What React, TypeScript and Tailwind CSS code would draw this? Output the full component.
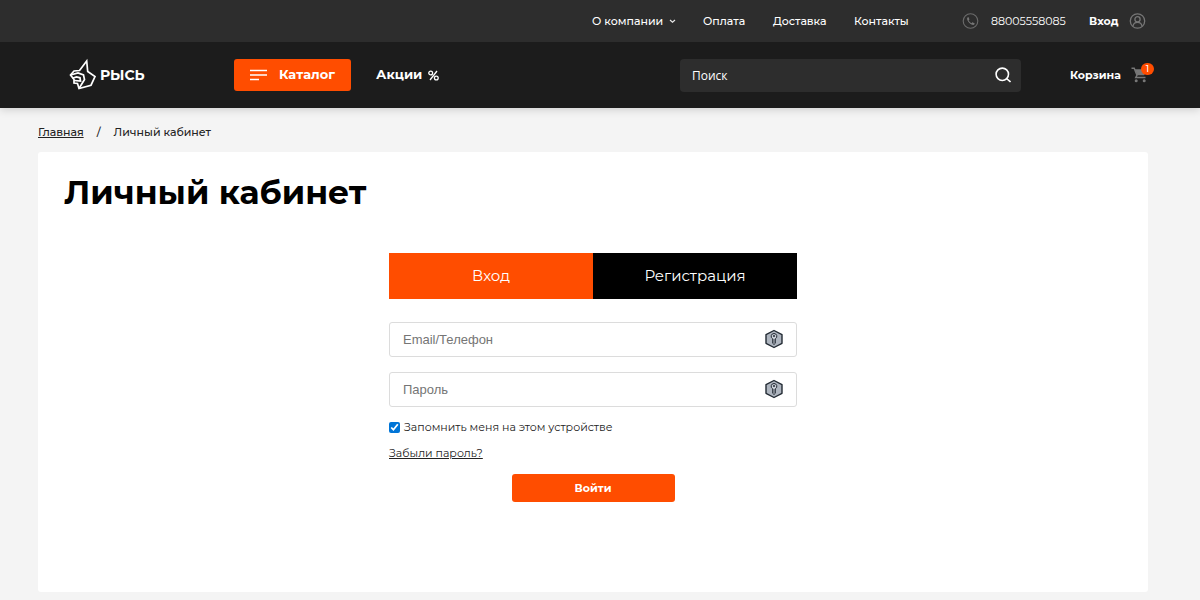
import type { ReactNode } from "react";

function ChevronIcon() {
	return (
		<svg width="7" height="5" viewBox="0 0 7 5" fill="none" aria-hidden="true">
			<path d="M1 1l2.5 2.3L6 1" stroke="#e5e5e5" strokeWidth="1.2" />
		</svg>
	);
}

function PhoneIcon() {
	return (
		<svg width="17" height="16" viewBox="0 0 16 16" fill="none" aria-hidden="true">
			<circle cx="8" cy="8" r="7.3" stroke="#6b6b6b" strokeWidth="1.1" />
			<path
				d="M5.4 4.2c-1 .7-1 1.8-.3 3.3.8 1.7 2.2 3.2 3.9 4.1 1.5.7 2.5.5 3.1-.5.2-.4.1-.6-.2-.8l-1.5-.9c-.3-.2-.6-.1-.8.2l-.5.6c-1.3-.5-2.4-1.7-3-3l.6-.5c.2-.2.3-.5.1-.8l-.7-1.5c-.2-.3-.4-.4-.7-.2z"
				fill="#777"
			/>
		</svg>
	);
}

function UserIcon() {
	return (
		<svg
			width="17"
			height="16"
			viewBox="0 0 16 16"
			fill="none"
			stroke="#777"
			strokeWidth="1.3"
			aria-hidden="true"
		>
			<circle cx="8" cy="8" r="7.2" />
			<circle cx="8" cy="6.2" r="2.6" />
			<path d="M3.5 13c.4-2.4 2-3.7 4.5-3.7s4.1 1.3 4.5 3.7" />
		</svg>
	);
}

function CartIcon() {
	return (
		<svg width="17" height="16" viewBox="0 0 17 16" aria-hidden="true">
			<path d="M.5 1.2h2.7L6 8.2l-1.2 2.3h9.7" fill="none" stroke="#777" strokeWidth="1.5" />
			<path d="M3.7 2.3h12.3l-2.8 6H6.3z" fill="#777" />
			<circle cx="5.2" cy="13.7" r="1.5" fill="#777" />
			<circle cx="13.2" cy="13.7" r="1.5" fill="#777" />
		</svg>
	);
}

function LynxLogo() {
	return (
		<svg
			width="28"
			height="34"
			viewBox="0 0 28 34"
			fill="none"
			stroke="#fff"
			strokeWidth="1.7"
			aria-hidden="true"
		>
			<path d="M10.5 12.5L17.7 3l1 10.5L26 18.5l-4 8.7L10 30.500l-1.500-5L5 25v-3.500l-3.500-4.500L5 13z" />
			<path d="M1.500 17L9 15l5.500 2 1 4.500-5.500 9" />
			<path d="M3.500 20.300L7.500 19l3.500.8.5 3.200-6.500-.5" />
		</svg>
	);
}

function KeyIcon() {
	return (
		<svg width="20" height="20" viewBox="0 0 20 20" aria-hidden="true">
			<path
				d="M10 1.5l8 4.2v8.6l-8 4.2-8-4.2V5.7z"
				fill="#aeb5bf"
				stroke="#222a33"
				strokeWidth="1.4"
				strokeLinejoin="round"
			/>
			<path
				d="M10 4.500a2.8 2.8 0 0 0-1.300 5.300v4.500l1.300 1.200 1.300-1.200V9.800A2.8 2.8 0 0 0 10 4.500z"
				fill="#c9ced6"
				stroke="#222a33"
				strokeWidth="1"
			/>
			<circle cx="10" cy="7" r="1" fill="#222a33" />
			<path d="M10 10v4" stroke="#222a33" strokeWidth=".7" />
		</svg>
	);
}

interface FieldProps {
	id: string;
	type: string;
	label: string;
}

function Field({ id, type, label }: FieldProps) {
	return (
		<div className="flex h-[35px] items-center rounded-[3px] border border-[#dcdcdc] bg-white pr-3 pb-px pl-[13px]">
			<input
				id={id}
				type={type}
				placeholder={label}
				aria-label={label}
				className="h-8 min-w-0 flex-1 font-['Liberation_Sans',sans-serif] text-[13px] outline-none placeholder:text-[#757575]"
			/>
			<KeyIcon />
		</div>
	);
}

function NavLink({ className, children }: { className: string; children: ReactNode }) {
	return (
		<a href="#" className={`flex items-center gap-[6px] font-medium whitespace-nowrap ${className}`}>
			{children}
		</a>
	);
}

export default function App() {
	return (
		<div className="min-h-screen bg-[#f4f4f4] pb-2 font-['Montserrat','Inter',sans-serif] text-[#222]">
			<header className="relative text-white shadow-[0_2px_8px_rgba(0,0,0,0.15)]">
				<nav className="flex h-[42px] items-center justify-end bg-[#2d2d2d] pr-[54px] text-[11px]">
					<NavLink className="w-[111px]">
						О компании <ChevronIcon />
					</NavLink>
					<NavLink className="w-[70px]">Оплата</NavLink>
					<NavLink className="w-[81px]">Доставка</NavLink>
					<NavLink className="w-[108px]">Контакты</NavLink>
					<a href="tel:88005558085" className="flex w-[127px] items-center gap-3">
						<PhoneIcon />
						88005558085
					</a>
					<a href="#" className="flex w-[57px] items-center justify-between font-bold">
						Вход
						<UserIcon />
					</a>
				</nav>
				<div className="flex h-[66px] items-center bg-[#1c1c1c] pr-[52px] pl-[69px] text-[13px] font-bold">
					<a href="#" className="flex w-[165px] items-center gap-[3px] text-[14px]">
						<LynxLogo />
						РЫСЬ
					</a>
					<button
						type="button"
						className="flex h-8 w-[117px] items-center gap-3 rounded-[3px] bg-[#ff4d00] pl-4"
					>
						<svg width="17" height="12" viewBox="0 0 17 12" aria-hidden="true">
							<path d="M0 1.5h17M0 6h17M0 10.5h9" stroke="#fff" strokeWidth="1.4" />
						</svg>
						Каталог
					</button>
					<a href="#" className="ml-[25px] flex items-center gap-[6px]">
						Акции
						<svg
							width="11"
							height="11"
							viewBox="0 0 11 11"
							fill="none"
							stroke="#fff"
							strokeWidth="1.3"
							aria-hidden="true"
						>
							<circle cx="2.7" cy="3" r="1.9" />
							<circle cx="8.3" cy="8" r="1.9" />
							<path d="M9 1L2 10" />
						</svg>
					</a>
					<form className="ml-auto flex h-[33px] w-[341px] items-center rounded-[4px] bg-[#2d2d2d] pr-[10px] pl-3">
						<input
							id="search"
							type="text"
							placeholder="Поиск"
							aria-label="Поиск"
							className="h-8 min-w-0 flex-1 font-['Open_Sans',sans-serif] text-[12px] font-normal outline-none placeholder:text-white"
						/>
						<button type="button" aria-label="Найти">
							<svg
								width="16"
								height="16"
								viewBox="0 0 16 16"
								fill="none"
								stroke="#fff"
								strokeWidth="1.6"
								aria-hidden="true"
							>
								<circle cx="7.3" cy="7.3" r="6.2" />
								<path d="M11.5 11.5l4 3.5" />
							</svg>
						</button>
					</form>
					<a href="#" className="relative ml-[49px] flex w-[78px] items-center justify-between text-[11px]">
						Корзина
						<CartIcon />
						<span className="absolute -top-1 -right-[6px] flex h-3 w-[13px] items-center justify-center rounded-full bg-[#ff4d00] text-[9px] font-medium">
							1
						</span>
					</a>
				</div>
			</header>

			<main className="pr-[52px] pl-[38px]">
				<nav className="flex h-11 items-center gap-[13px] pt-1 text-[11px] font-medium">
					<a href="#" className="underline">
						Главная
					</a>
					<span>/</span>
					<span>Личный кабинет</span>
				</nav>

				<section className="min-h-[440px] rounded-[3px] bg-white px-[26px] pt-5">
					<h1 className="text-[33px] leading-10 font-bold text-black">Личный кабинет</h1>

					<form className="mx-auto mt-[41px] w-[408px]">
						<div className="grid h-[46px] grid-cols-2 text-[15px] text-white">
							<button type="button" className="bg-[#ff4d00]">
								Вход
							</button>
							<button type="button" className="bg-black">
								Регистрация
							</button>
						</div>
						<div className="mt-[23px] flex flex-col gap-[15px]">
							<Field id="login" type="text" label="Email/Телефон" />
							<Field id="password" type="password" label="Пароль" />
						</div>
						<label className="mt-[11px] flex h-[18px] items-center gap-1 text-[11px]">
							<input type="checkbox" defaultChecked className="size-[11px] accent-[#0075d7]" />
							Запомнить меня на этом устройстве
						</label>
						<a href="#" className="mt-2 block w-fit text-[11px] leading-[18px] underline">
							Забыли пароль?
						</a>
						<button
							type="submit"
							className="mx-auto mt-3 block h-7 w-[163px] rounded-[3px] bg-[#ff4d00] text-[11px] font-bold text-white"
						>
							Войти
						</button>
					</form>
				</section>
			</main>
		</div>
	);
}
